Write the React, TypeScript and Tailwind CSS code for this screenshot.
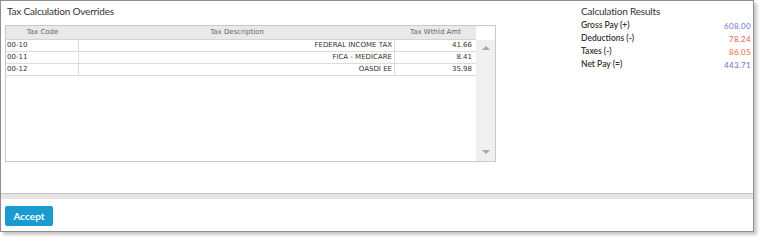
import React from "react";

type TaxRow = { code: string; description: string; amount: string };

const rows: TaxRow[] = [
  { code: "00-10", description: "FEDERAL INCOME TAX", amount: "41.66" },
  { code: "00-11", description: "FICA - MEDICARE", amount: "8.41" },
  { code: "00-12", description: "OASDI EE", amount: "35.98" },
];

const results = [
  { label: "Gross Pay (+)", value: "608.00", color: "text-[#7f7fd0]" },
  { label: "Deductions (-)", value: "78.24", color: "text-[#ee6a6a]" },
  { label: "Taxes (-)", value: "86.05", color: "text-[#ee7452]" },
  { label: "Net Pay (=)", value: "443.71", color: "text-[#7676c6]" },
];

const lato = "font-['Lato','Open_Sans',sans-serif]";
const grid = "font-['DejaVu_Sans','Verdana',sans-serif]";

const TaxGrid: React.FC = () => (
  <div className={`w-[491px] h-[137px] border border-[#c9c9c9] flex flex-col ${grid} text-[7px]`}>
    <div className="flex h-[14px] shrink-0">
      <div className="flex w-[470px] bg-[#e9e9e9] border-b border-[#d4d4d4] text-[#666] items-center">
        <div className="w-[73px] text-center">Tax Code</div>
        <div className="w-[316px] text-center">Tax Description</div>
        <div className="w-[81px] text-center">Tax Wthld Amt</div>
      </div>
      <div className="flex-1 bg-white" />
    </div>
    <div className="flex flex-1">
      <div className="w-[470px]">
        {rows.map((r) => (
          <div key={r.code} className="flex h-[12px] border-b border-[#dcdcdc] text-[#333] items-center">
            <div className="w-[73px] h-full flex items-center pl-[1px] border-r border-[#dcdcdc]">{r.code}</div>
            <div className="w-[316px] h-full flex items-center justify-end pr-[2px] border-r border-[#dcdcdc]">
              {r.description}
            </div>
            <div className="w-[81px] h-full flex items-center justify-end pr-[4px]">{r.amount}</div>
          </div>
        ))}
      </div>
      <div className="flex-1 bg-[#f0f0f0] flex flex-col items-center justify-between pt-[6px] pb-[7px]">
        <div className="w-0 h-0 border-l-[4px] border-r-[4px] border-b-[4px] border-l-transparent border-r-transparent border-b-[#a6a6a6]" />
        <div className="w-0 h-0 border-l-[4px] border-r-[4px] border-t-[4px] border-l-transparent border-r-transparent border-t-[#a6a6a6]" />
      </div>
    </div>
  </div>
);

export default function App() {
  return (
    <div className="w-[764px] h-[241px] bg-white">
      <div className="w-[754px] h-[232px] border border-[#8e8e8e] shadow-[3px_3px_3px_rgba(0,0,0,0.22)] flex flex-col bg-white">
        <div className="flex h-[192px] shrink-0">
          <div className="pl-[4px] pt-[3px]">
            <div className={`${lato} text-[10px] tracking-[-0.2px] leading-[14px] text-[#333] pl-[2px] h-[21px]`}>
              Tax Calculation Overrides
            </div>
            <TaxGrid />
          </div>
          <div className={`ml-auto w-[172px] pr-[2px] pt-[3px] ${lato}`}>
            <div className="text-[10px] tracking-[-0.2px] leading-[14px] text-[#333] h-[15px]">Calculation Results</div>
            {results.map((r) => (
              <div key={r.label} className="flex justify-between items-center h-[13px]">
                <span className="font-semibold text-[#333] text-[8.5px]">{r.label}</span>
                <span className={`${r.color} text-[8px] font-medium tracking-[0.3px]`}>{r.value}</span>
              </div>
            ))}
          </div>
        </div>
        <div className="h-[6px] shrink-0 bg-[#e4e4e4] border-t border-[#c4c4c4]" />
        <div className="flex-1 flex items-start pl-[4px] pt-[7px]">
          <button className={`${lato} w-[48px] h-[20px] rounded-[2px] bg-[#1a9bd0] text-white text-[10px] leading-[20px] font-bold`}>
            Accept
          </button>
        </div>
      </div>
    </div>
  );
}
